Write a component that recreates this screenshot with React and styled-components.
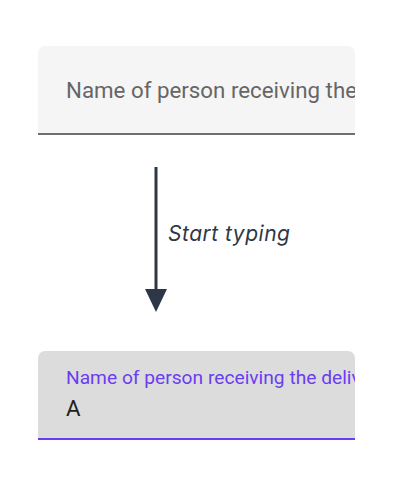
import React from "react";
import styled, { createGlobalStyle } from "styled-components";

const GlobalStyle = createGlobalStyle`
  html, body {
    margin: 0;
    padding: 0;
    background: #fff;
  }
  body {
    font-family: Roboto, "Noto Sans", sans-serif;
  }
`;

// Page wrapper
const Page = styled.div`
  width: 400px;
  height: 493px;
  box-sizing: border-box;
  padding: 46px 45px 0 38px;
  display: flex;
  flex-direction: column;
`;

// Material style filled text field
const Field = styled.div`
  height: 89px;
  box-sizing: border-box;
  border-radius: 7px 7px 0 0;
  background: ${(props) => (props.focused ? "#dcdcdc" : "#f5f5f5")};
  border-bottom: 2px solid ${(props) => (props.focused ? "#6a3df0" : "#6f6f6f")};
  overflow: hidden;
  padding-left: 28px;
  display: flex;
  flex-direction: column;
  justify-content: ${(props) => (props.focused ? "flex-start" : "center")};
  padding-top: ${(props) => (props.focused ? "15px" : "0")};
  white-space: nowrap;
`;

const Placeholder = styled.span`
  font-size: 22.3px;
  color: #666;
`;

const FloatLabel = styled.span`
  font-size: 19.2px;
  color: #6a3df0;
  line-height: 24px;
`;

const Value = styled.span`
  font-size: 22.3px;
  color: #222;
  line-height: 28px;
  margin-top: 4px;
`;

// Arrow with caption between the two fields
const Step = styled.div`
  display: flex;
  align-items: center;
  margin: 32px 0 39px 106px;
`;

const Caption = styled.span`
  font-family: Inter, "Open Sans", sans-serif;
  font-style: italic;
  font-size: 21px;
  letter-spacing: 0.5px;
  color: #2d3748;
  margin-top: -12px;
`;

const Arrow = () => (
  <svg width="24" height="145" viewBox="0 0 24 145">
    <line x1="12" y1="0" x2="12" y2="124" stroke="#2d3748" strokeWidth="3" />
    <polygon points="1,122 23,122 12,145" fill="#2d3748" />
  </svg>
);

export default function App() {
  return (
    <>
      <GlobalStyle />
      <Page>
        <Field>
          <Placeholder>Name of person receiving the delivery</Placeholder>
        </Field>
        <Step>
          <Arrow />
          <Caption>Start typing</Caption>
        </Step>
        <Field focused>
          <FloatLabel>Name of person receiving the delivery</FloatLabel>
          <Value>A</Value>
        </Field>
      </Page>
    </>
  );
}
